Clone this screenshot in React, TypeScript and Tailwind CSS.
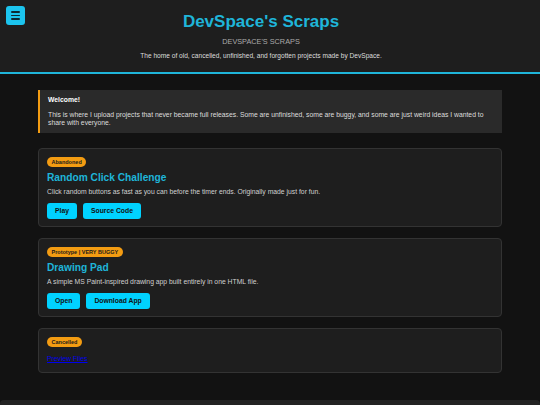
import React from "react";

const font = { fontFamily: '"Liberation Sans", Arial, sans-serif' };

function Badge({ children }: { children: React.ReactNode }) {
  return (
    <span className="inline-block rounded-full bg-[#f39c12] px-[4.5px] text-[5.5px] font-bold leading-[10px] text-[#1a1a1a]">
      {children}
    </span>
  );
}

function Btn({ children }: { children: React.ReactNode }) {
  return (
    <button className="flex h-4 items-center rounded-[3px] bg-[#00d2ff] px-2 text-[6.8px] font-bold text-[#111]">
      {children}
    </button>
  );
}

function Card({
  badge,
  title,
  desc,
  buttons,
}: {
  badge: string;
  title: string;
  desc: string;
  buttons: string[];
}) {
  return (
    <div className="rounded-[4px] border border-[#333] bg-[#1e1e1e] px-[8px] pb-[7px] pt-[8px]">
      <div className="flex">
        <Badge>{badge}</Badge>
      </div>
      <h2 className="mt-[5px] text-[10.2px] font-bold leading-[12px] text-[#1fb5d9]">{title}</h2>
      <p className="mt-[4px] text-[6.8px] leading-[8px] text-[#d0d0d0]">{desc}</p>
      <div className="mt-[7px] flex gap-[6px]">
        {buttons.map((b) => (
          <Btn key={b}>{b}</Btn>
        ))}
      </div>
    </div>
  );
}

export default function App() {
  return (
    <div className="flex min-h-[405px] flex-col bg-[#121212] text-[#ddd]" style={font}>
      <header className="relative h-[74px] border-b-2 border-[#1fb5d9] bg-[#1e1e1e] pr-[18px] text-center">
        <button className="absolute left-[6px] top-[6px] flex h-[19px] w-[19px] flex-col items-center justify-center gap-[2px] rounded-[3px] bg-[#1cc4ee]">
          <span className="block h-[1.5px] w-[9px] rounded bg-[#0d2a33]" />
          <span className="block h-[1.5px] w-[9px] rounded bg-[#0d2a33]" />
          <span className="block h-[1.5px] w-[9px] rounded bg-[#0d2a33]" />
        </button>
        <h1 className="pt-[12px] text-[17px] font-bold leading-[20px] text-[#1fb5d9]">DevSpace's Scraps</h1>
        <div className="mt-[5px] text-[7.3px] leading-[9px] text-[#aaa]">DEVSPACE'S SCRAPS</div>
        <p className="mt-[6px] text-[6.6px] leading-[8px] text-[#ddd]">
          The home of old, cancelled, unfinished, and forgotten projects made by DevSpace.
        </p>
      </header>

      <main className="mx-auto mt-[16px] flex w-[464px] flex-col">
        <div className="border-l-2 border-[#f39c12] bg-[#2a2a2a] px-[8px] pb-[6px] pt-[6px]">
          <div className="text-[6.8px] font-bold leading-[8px] text-white">Welcome!</div>
          <p className="mt-[7px] text-[6.8px] leading-[8px] text-[#ddd]">
            This is where I upload projects that never became full releases. Some are unfinished, some are buggy, and some are just weird ideas I wanted to share with everyone.
          </p>
        </div>

        <div className="mt-[15px] flex flex-col gap-[11px]">
          <Card
            badge="Abandoned"
            title="Random Click Challenge"
            desc="Click random buttons as fast as you can before the timer ends. Originally made just for fun."
            buttons={["Play", "Source Code"]}
          />
          <Card
            badge="Prototype | VERY BUGGY"
            title="Drawing Pad"
            desc="A simple MS Paint-inspired drawing app built entirely in one HTML file."
            buttons={["Open", "Download App"]}
          />
          <div className="rounded-[4px] border border-[#333] bg-[#1e1e1e] px-[8px] pb-[9px] pt-[8px]">
            <div className="flex">
              <Badge>Cancelled</Badge>
            </div>
            <a href="#" className="mt-[8px] block w-fit text-[6.8px] leading-[8px] text-[#0000ee] underline">
              Preview Files
            </a>
          </div>
        </div>
      </main>

      <footer className="mt-[27px] h-[20px] rounded-t-[4px] bg-[#222]" />
    </div>
  );
}
